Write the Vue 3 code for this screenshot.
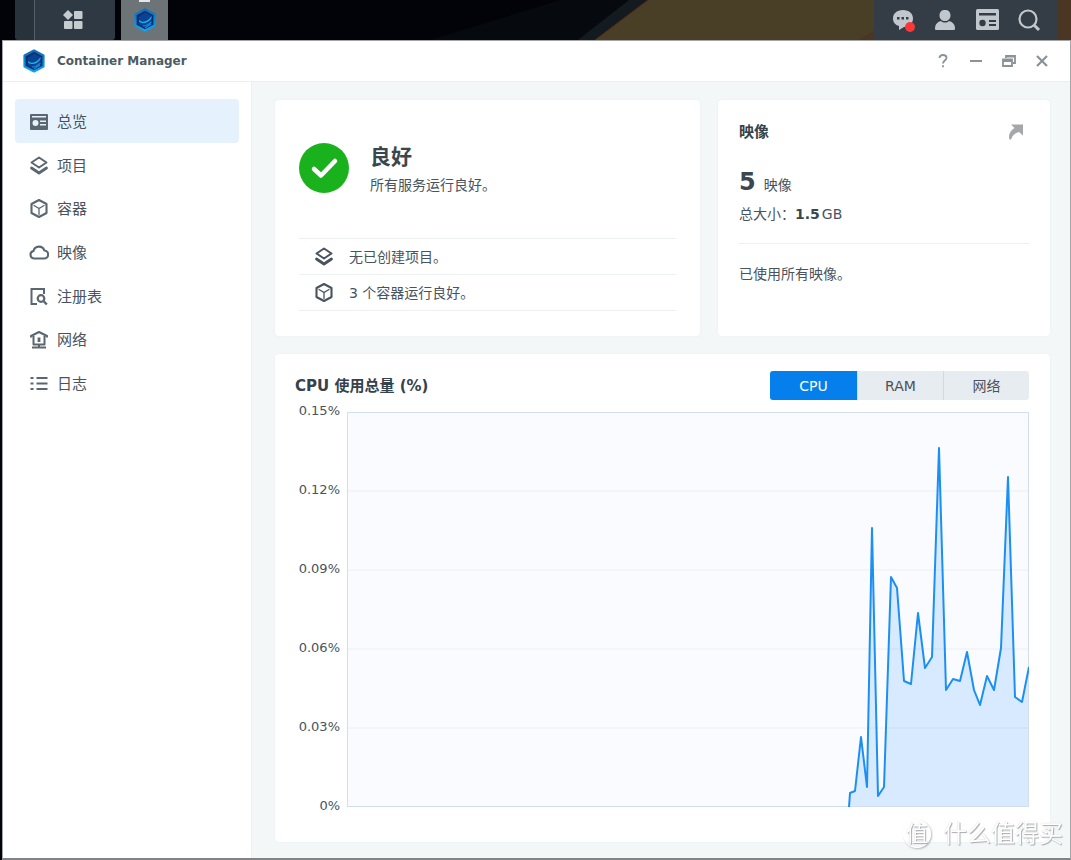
<script setup>
import { computed, ref } from 'vue'

const navItems = [
  { id: 'overview', label: '总览' },
  { id: 'layers', label: '项目' },
  { id: 'cube', label: '容器' },
  { id: 'cloud', label: '映像' },
  { id: 'registry', label: '注册表' },
  { id: 'network', label: '网络' },
  { id: 'log', label: '日志' }
]
const activeNav = ref('overview')

const services = [
  { icon: 'layers', text: '无已创建项目。' },
  { icon: 'cube', text: '3 个容器运行良好。' }
]

const tabs = ['CPU', 'RAM', '网络']
const activeTab = ref('CPU')

const axis = ['0.15%', '0.12%', '0.09%', '0.06%', '0.03%', '0%']

const samples = [
  [502, 395], [503, 381], [508, 379], [514, 325], [520, 375], [525, 116],
  [531, 384], [537, 375], [544, 165], [550, 176], [557, 269], [564, 272],
  [571, 201], [578, 256], [585, 245], [592, 36], [599, 278], [606, 267],
  [613, 269], [620, 240], [627, 278], [633, 293], [640, 264], [647, 278],
  [654, 236], [661, 65], [668, 285], [675, 290], [682, 255]
]
const line = computed(() => samples.map((p) => p.join(',')).join(' '))
const area = computed(() => `${line.value} 682,395`)
</script>

<template>
  <div class="desktop">
    <svg class="defs" aria-hidden="true">
      <defs>
        <linearGradient id="hexRim" x1="0" y1="0" x2="0" y2="1">
          <stop offset="0" stop-color="#0a6fc0" />
          <stop offset="1" stop-color="#12a2ee" />
        </linearGradient>
        <symbol id="logo" viewBox="0 0 24 26">
          <path d="M12 2.500 21.500 7.500v11L12 23.500l-9.500-5v-11z" fill="#092d6b" stroke="url(#hexRim)" stroke-width="2.2" stroke-linejoin="round" />
          <path d="M5.500 10 12 5.500 18.500 9v8L12 21l-6.500-4z" fill="#0a4394" />
          <path d="M6 13c4 3.500 9 1.500 12.500-4v2c-3 5-8.500 6.500-12.500 3.500z" fill="#17b8e6" />
          <path d="M10 19c4 0 6-2 8.500-4M12 21l6-4" stroke="#1488dc" stroke-width="1.2" fill="none" />
        </symbol>
        <symbol id="overview" viewBox="0 0 20 20">
          <path fill-rule="evenodd" fill="currentColor" d="M2 2h16a1 1 0 0 1 1 1v14a1 1 0 0 1-1 1H2a1 1 0 0 1-1-1V3a1 1 0 0 1 1-1zm1 2v1.500h14V4zm3.500 4a3 3 0 1 0 0 6 3 3 0 0 0 0-6zM11 8.500V10h6V8.500zm0 3.500v1.500h6V12z" />
        </symbol>
        <symbol id="layers" viewBox="0 0 20 20">
          <g fill="none" stroke="currentColor" stroke-width="2" stroke-linejoin="round" stroke-linecap="round">
            <path d="M10 1.500 17.500 6.500 10 11.500 2.500 6.500z" />
            <path d="M2.500 12 10 17l7.500-5" stroke-width="2.800" />
          </g>
        </symbol>
        <symbol id="cube" viewBox="0 0 20 20">
          <path d="M10 1 17.500 5v9L10 18l-7.500-4V5z" fill="none" stroke="currentColor" stroke-width="2.100" stroke-linejoin="round" />
          <path d="M5 6.500l5 3 5-3M10 9.500v6" fill="none" stroke="currentColor" stroke-width="1.300" stroke-linecap="round" />
        </symbol>
        <symbol id="cloud" viewBox="0 0 20 20">
          <path d="M5 15.500a3.800 3.800 0 0 1-.5-7.500 5.600 5.600 0 0 1 10.800-.5 4 4 0 0 1-.3 8z" fill="none" stroke="currentColor" stroke-width="2.100" stroke-linejoin="round" />
        </symbol>
        <symbol id="registry" viewBox="0 0 20 20">
          <g fill="none" stroke="currentColor" stroke-width="2">
            <path d="M8 17H2.500V2h12.500v5" />
            <circle cx="12" cy="11.500" r="3.300" stroke-width="2.200" />
            <path d="m14.500 14 3.300 3.500" stroke-width="2.400" />
          </g>
        </symbol>
        <symbol id="network" viewBox="0 0 20 20">
          <g fill="none" stroke="currentColor" stroke-width="2" stroke-linejoin="round">
            <path d="M2 7.500V6L10 2l8 4v1.500M4.500 6v8.500h11V6M10 14.500v3M3 17.500h14" />
            <path d="M10 7.500v4.500" stroke-width="2.800" />
          </g>
        </symbol>
        <symbol id="log" viewBox="0 0 20 20">
          <path d="M1.500 4h3M7.500 4h11M1.500 9.500h3M7.500 9.500h11M1.500 15h3M7.500 15h11" stroke="currentColor" stroke-width="2.200" />
        </symbol>
      </defs>
    </svg>

    <header class="taskbar">
      <svg class="wallpaper" viewBox="0 0 1071 41" preserveAspectRatio="none" aria-hidden="true">
        <path d="M0 0h1071v41H0z" fill="#020308" />
        <path d="M430 41 560 0h90l-54 41z" fill="#06090e" />
        <path d="M578 41 629 0h19l-53 41z" fill="#131b21" />
        <path d="M595 41 648 0h423v41z" fill="#493e26" />
        <path d="M595 41 648 0" stroke="#5a2817" />
        <path d="M858 41 875 31V0h196v41z" fill="#4a3622" />
      </svg>
      <button class="menu-btn" aria-label="主菜单">
        <svg viewBox="0 0 20 20" width="20" height="20" fill="#c6cbd0">
          <path d="m5 0 5 5-5 5-5-5z" />
          <rect x="11" y="1" width="8.500" height="8" rx="1" />
          <rect x="1" y="11" width="8.500" height="8" rx="1" />
          <rect x="11" y="11" width="8.500" height="8" rx="1" />
        </svg>
      </button>
      <button class="task-btn" aria-label="Container Manager">
        <svg width="24" height="26"><use href="#logo" /></svg>
      </button>
      <nav class="tray">
        <button aria-label="通知">
          <svg width="24" height="24" viewBox="0 0 24 24">
            <path d="M12 2c6 0 10 3.500 10 8.500S18 19 13 19l-5 3v-4C4 17 2 14 2 10.500 2 5.500 6 2 12 2z" fill="#c1c7cd" />
            <path d="M6 9h2.500v2.500H6zM10.500 9H13v2.500h-2.500zM15 9h2.500v2.500H15z" fill="#343d46" />
            <circle cx="19" cy="19" r="5" fill="#fb3839" />
          </svg>
        </button>
        <button aria-label="用户">
          <svg width="24" height="24" viewBox="0 0 24 24" fill="#c1c7cd">
            <path d="M12 2c3.500 0 5.500 2 5.500 5.500S15 13 12 13 6.500 11 6.500 7.500 8.500 2 12 2zM8 13c2 2 6 2 8 0 4 1 6 4 6 7.500 0 1-.5 1.500-1.500 1.500h-17c-1 0-1.500-.5-1.500-1.500C2 17 4 14 8 13z" />
          </svg>
        </button>
        <button aria-label="小组件">
          <svg width="24" height="24" viewBox="0 0 24 24">
            <rect x="1" y="1" width="23" height="21" rx="1.500" fill="#c1c7cd" />
            <path d="M4 5h17v2.500H4zM14 12h7v2h-7zm0 4h7v2h-7z" fill="#343d46" />
            <circle cx="7.500" cy="15" r="3.200" fill="#343d46" />
          </svg>
        </button>
        <button aria-label="搜索">
          <svg width="24" height="24" viewBox="0 0 24 24" fill="none" stroke="#c1c7cd">
            <circle cx="11" cy="11" r="8.500" stroke-width="2.200" />
            <path d="m17 17 5 5" stroke-width="3" />
          </svg>
        </button>
      </nav>
    </header>

    <section class="window">
      <div class="titlebar">
        <svg width="24" height="26" aria-hidden="true"><use href="#logo" /></svg>
        <h1>Container Manager</h1>
        <div class="controls">
          <button aria-label="帮助">
            <svg viewBox="0 0 14 14"><path d="M3.500 4c0-2 1.500-3 3.500-3s3.500 1 3.500 2.800C10.500 6.500 7 6.500 7 9.500M7 11.300v2" /></svg>
          </button>
          <button aria-label="最小化">
            <svg viewBox="0 0 14 14"><path d="M1 7h12" stroke-width="2" /></svg>
          </button>
          <button aria-label="还原">
            <svg viewBox="0 0 14 14"><path d="M4 4V2h9v7h-2M4 2.500h9" /><path d="M1 5.500h9v6.500H1zM1 7h9" /></svg>
          </button>
          <button aria-label="关闭">
            <svg viewBox="0 0 14 14"><path d="m2 2 10 10M12 2 2 12" stroke-width="2.200" /></svg>
          </button>
        </div>
      </div>

      <div class="body">
        <nav class="sidebar">
          <button
            v-for="item in navItems"
            :key="item.id"
            :class="{ active: activeNav === item.id }"
            @click="activeNav = item.id"
          >
            <svg width="20" height="20" aria-hidden="true"><use :href="'#' + item.id" /></svg>
            <span>{{ item.label }}</span>
          </button>
        </nav>

        <main class="content">
          <div class="summary">
            <section class="card health">
              <div class="status">
                <svg width="50" height="50" viewBox="0 0 50 50" aria-hidden="true">
                  <circle cx="25" cy="25" r="25" fill="#1ab21c" />
                  <path d="m15 26 7 6.500L36 18" fill="none" stroke="#fff" stroke-width="4.500" stroke-linecap="round" stroke-linejoin="round" />
                </svg>
                <div>
                  <h2>良好</h2>
                  <p>所有服务运行良好。</p>
                </div>
              </div>
              <ul>
                <li v-for="s in services" :key="s.icon">
                  <svg width="20" height="20" aria-hidden="true"><use :href="'#' + s.icon" /></svg>
                  <span>{{ s.text }}</span>
                </li>
              </ul>
            </section>

            <section class="card images">
              <div class="card-head">
                <h3>映像</h3>
                <button aria-label="打开映像">
                  <svg width="16" height="16" viewBox="0 0 16 16"><path d="M3 .5h12v11L11 8C7.500 9 4.500 11 3 15.500H1.500C0 11 2 7 6.500 4z" fill="#a4a8ab" /></svg>
                </button>
              </div>
              <p class="count"><strong>5</strong><span>映像</span></p>
              <p class="size"><span>总大小：</span><strong>1.5</strong><span>GB</span></p>
              <p class="note">已使用所有映像。</p>
            </section>
          </div>

          <section class="card usage">
            <div class="usage-head">
              <h3>CPU 使用总量 (%)</h3>
              <div class="tabs">
                <button
                  v-for="tab in tabs"
                  :key="tab"
                  :class="{ active: activeTab === tab }"
                  @click="activeTab = tab"
                >{{ tab }}</button>
              </div>
            </div>
            <div class="chart">
              <div class="axis">
                <span v-for="a in axis" :key="a">{{ a }}</span>
              </div>
              <div class="plot">
                <svg viewBox="0 0 682 395" preserveAspectRatio="none" role="img" aria-label="CPU">
                  <rect width="682" height="395" fill="#fafbff" />
                  <path d="M0 79h682M0 158h682M0 237h682M0 316h682" class="grid" />
                  <polygon :points="area" fill="#0a84ff" fill-opacity="0.14" />
                  <rect width="682" height="395" class="frame" />
                  <polyline :points="line" class="series" />
                </svg>
              </div>
            </div>
          </section>
        </main>
      </div>
    </section>

    <div class="watermark"><span class="mark">值</span><span>什么值得买</span></div>
  </div>
</template>

<style>
body {
  margin: 0;
}
</style>

<style scoped>
.desktop {
  display: flex;
  flex-direction: column;
  min-height: 100vh;
  box-sizing: border-box;
  background: #020308;
  color: #49535d;
  font-family: "DejaVu Sans", "Noto Sans CJK SC", sans-serif;
  font-size: 14px;
  line-height: 20px;
}
.defs {
  position: absolute;
  width: 0;
  height: 0;
}
h1, h2, h3, p, ul {
  margin: 0;
  padding: 0;
}
button {
  margin: 0;
  padding: 0;
  border: 0;
  background: none;
  color: inherit;
  font: inherit;
  cursor: pointer;
}
svg {
  display: block;
  flex: none;
}

/* Taskbar */
.taskbar {
  position: relative;
  display: flex;
  height: 40px;
  padding: 0 13px 0 15px;
  gap: 6px;
}
.wallpaper {
  position: absolute;
  inset: 0;
  width: 100%;
  height: 100%;
}
.menu-btn,
.task-btn,
.tray {
  position: relative;
  display: flex;
  align-items: center;
}
.menu-btn {
  width: 100px;
  padding-left: 48px;
  background: linear-gradient(90deg, #28323a 19px, #55606a 19px, #55606a 20px, #2e3943 20px);
  border-radius: 0 0 3px 3px;
}
.task-btn {
  width: 47px;
  justify-content: center;
  background: #6c7478;
}
.task-btn::before {
  content: "";
  position: absolute;
  top: 0;
  left: 18px;
  width: 11px;
  height: 2px;
  background: #e4e6e8;
}
.tray {
  margin-left: auto;
  padding: 0 17px;
  gap: 18px;
  background: #343d46;
}

/* Window */
.window {
  flex: 1;
  display: flex;
  flex-direction: column;
  margin-left: 2px;
  border: 1px solid #a3a5a7;
  border-bottom: 2px solid #808488;
  background: #fff;
}
.titlebar {
  display: flex;
  align-items: center;
  height: 40px;
  padding: 0 21px 0 19px;
  border-bottom: 1px solid #ebeff1;
}
h1 {
  margin-left: 11px;
  color: #4c5b62;
  font-size: 12px;
  font-weight: bold;
}
.controls {
  display: flex;
  gap: 19px;
  margin-left: auto;
}
.controls svg {
  width: 14px;
  height: 14px;
  fill: none;
  stroke: #8a9298;
  stroke-width: 1.8;
}
.body {
  flex: 1;
  display: flex;
}
.sidebar {
  flex: none;
  display: grid;
  grid-template-rows: repeat(7, 1fr);
  box-sizing: border-box;
  width: 248px;
  height: 340px;
  padding: 17px 12px;
}
.sidebar button {
  display: flex;
  align-items: center;
  gap: 8px;
  width: 100%;
  padding: 2px 14px 0;
  border-radius: 4px;
  color: #5a6670;
  font-size: 15px;
}
.sidebar span {
  color: #49535d;
}
.sidebar .active {
  background: #e5f1fd;
}
.content {
  flex: 1;
  display: flex;
  flex-direction: column;
  gap: 18px;
  min-width: 0;
  padding: 18px 20px 16px 23px;
  border-left: 1px solid #ebf0f2;
  background: #f3f7f8;
}
.card {
  box-sizing: border-box;
  border-radius: 4px;
  background: #fff;
  box-shadow: 0 0 2px #e4eaed;
}
.summary {
  display: grid;
  grid-template-columns: 425fr 332fr;
  gap: 18px;
}
.health {
  padding: 43px 24px 25px;
}
.status {
  display: flex;
  gap: 21px;
  height: 95px;
}
h2 {
  color: #3b474f;
  font-size: 21px;
  line-height: 28px;
}
.status p {
  margin-top: 4px;
}
ul {
  list-style: none;
  border-top: 1px solid #edf0f2;
}
li {
  display: flex;
  align-items: center;
  gap: 15px;
  height: 35px;
  padding-left: 15px;
  border-bottom: 1px solid #edf0f2;
}
.images {
  padding: 22px 21px;
}
.card-head,
.usage-head {
  display: flex;
  align-items: center;
  justify-content: space-between;
}
.card-head button {
  margin-right: 5px;
}
h3 {
  color: #36424a;
  font-size: 15px;
}
.count {
  display: flex;
  align-items: baseline;
  gap: 8px;
  height: 32px;
  margin-top: 24px;
  line-height: 32px;
}
.count strong {
  font-size: 24px;
}
.images strong {
  color: #3b474f;
}
.size {
  margin-top: 6px;
  padding-bottom: 19px;
  border-bottom: 1px solid #edf0f2;
}
.size strong {
  margin-right: 2px;
}
.note {
  margin-top: 20px;
}
.usage {
  flex: 1;
  display: flex;
  flex-direction: column;
  padding: 17px 21px 35px 20px;
}
.tabs {
  display: flex;
  overflow: hidden;
  border-radius: 3px;
  background: #e7ecf0;
}
.tabs button {
  width: 86px;
  height: 29px;
}
.tabs button:first-child {
  width: 87px;
}
.tabs button + button {
  border-left: 1px solid #d3dadf;
}
.tabs .active {
  background: #057feb;
  color: #fff;
}
.chart {
  flex: 1;
  display: flex;
  gap: 7px;
  margin-top: 12px;
}
.axis {
  display: flex;
  flex-direction: column;
  justify-content: space-between;
  width: 45px;
  margin: -9px 0 -7px;
  font-size: 13px;
  line-height: 16px;
  text-align: right;
}
.plot {
  position: relative;
  flex: 1;
  min-height: 240px;
}
.plot svg {
  position: absolute;
  inset: 0;
  width: 100%;
  height: 100%;
}
.grid,
.frame,
.series {
  fill: none;
  vector-effect: non-scaling-stroke;
}
.grid {
  stroke: #eceff3;
}
.frame {
  stroke: #d3dee8;
  stroke-width: 2;
}
.series {
  stroke: #1c8ff3;
  stroke-width: 2;
  stroke-linejoin: round;
}

/* Watermark */
.watermark {
  position: fixed;
  right: 8px;
  bottom: 10px;
  display: flex;
  align-items: center;
  gap: 12px;
  color: #fff;
  font-size: 24px;
  line-height: 32px;
  text-shadow: 1px 1px 1px #a8abae, 0 0 1px #c0c3c5;
  pointer-events: none;
}
.mark {
  width: 26px;
  height: 26px;
  border: 1px solid #fff;
  border-radius: 50%;
  box-shadow: 1px 1px 2px #b4b7b9;
  font-size: 22px;
  line-height: 26px;
  text-align: center;
}
</style>
